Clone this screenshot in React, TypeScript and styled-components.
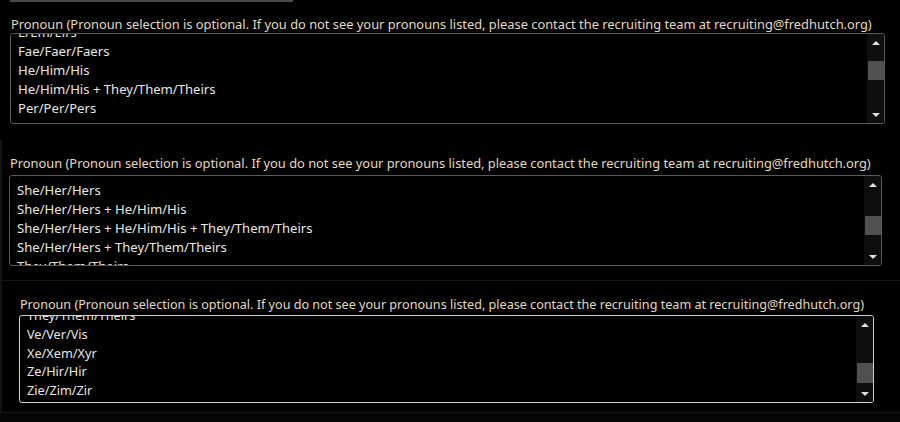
import React from "react";
import styled, { createGlobalStyle } from "styled-components";

const Global = createGlobalStyle`
  html, body { margin: 0; padding: 0; background: #000; }
  body { width: 900px; height: 422px; overflow: hidden; font-family: "Noto Sans", "Open Sans", sans-serif; }
`;

const Page = styled.div`
  width: 900px;
  height: 422px;
  background: #000;
  display: flex;
  flex-direction: column;
`;

const Section = styled.section<{ $h: number; $padTop: number; $padLeft: number; $padRight: number; $gap: number; $edge?: boolean; $topLine?: boolean }>`
  height: ${(p) => p.$h}px;
  box-sizing: border-box;
  padding: ${(p) => p.$padTop}px ${(p) => p.$padRight}px 0 ${(p) => p.$padLeft}px;
  display: flex;
  flex-direction: column;
  gap: ${(p) => p.$gap}px;
  border-left: ${(p) => (p.$edge ? "2px solid #141414" : "none")};
  border-top: ${(p) => (p.$topLine ? "1px solid #161616" : "none")};
`;

const TopRule = styled.div`
  width: 283px;
  height: 2px;
  background: #4a4a4a;
  margin-bottom: 14px;
`;

const Label = styled.div<{ $size: number }>`
  font-size: ${(p) => p.$size}px;
  line-height: 17px;
  color: #e4d9c3;
  white-space: nowrap;
  padding-left: 1px;
`;

const ListBox = styled.div<{ $h: number; $focused?: boolean }>`
  height: ${(p) => p.$h}px;
  box-sizing: border-box;
  border: 1px solid ${(p) => (p.$focused ? "#cfcfcf" : "#5a5a5a")};
  border-radius: 3px;
  display: flex;
  overflow: hidden;
  background: #000;
`;

const Viewport = styled.div`
  flex: 1;
  overflow: hidden;
  padding-left: 7px;
`;

const Items = styled.ul<{ $offset: number; $pitch: number; $size: number }>`
  list-style: none;
  margin: ${(p) => p.$offset}px 0 0 0;
  padding: 0;
  font-size: ${(p) => p.$size}px;
  li {
    height: ${(p) => p.$pitch}px;
    line-height: ${(p) => p.$pitch}px;
  }
`;

const Item = styled.li`
  color: #e8e6e2;
  white-space: nowrap;
`;

const ScrollBar = styled.div`
  width: 17px;
  background: #0e0e0e;
  display: flex;
  flex-direction: column;
  align-items: center;
`;

const Arrow = styled.div<{ $up?: boolean }>`
  height: 17px;
  width: 17px;
  display: flex;
  align-items: center;
  justify-content: center;
  &::after {
    content: "";
    width: 0;
    height: 0;
    border-left: 4px solid transparent;
    border-right: 4px solid transparent;
    ${(p) => (p.$up ? "border-bottom: 4px solid #e0e0e0;" : "border-top: 4px solid #e0e0e0;")}
  }
`;

const Track = styled.div`
  flex: 1;
  width: 100%;
  display: flex;
  flex-direction: column;
`;

const Thumb = styled.div<{ $top: number; $h: number }>`
  margin-top: ${(p) => p.$top}px;
  height: ${(p) => p.$h}px;
  width: 16px;
  margin-left: 1px;
  background: #505050;
`;

const Footer = styled.div`
  flex: 1;
  border-top: 1px solid #1a1a1a;
  background: #060606;
`;

type BoxProps = {
  items: string[];
  h: number;
  offset: number;
  pitch: number;
  size: number;
  thumbTop: number;
  thumbH: number;
  focused?: boolean;
};

const LABEL =
  "Pronoun (Pronoun selection is optional. If you do not see your pronouns listed, please contact the recruiting team at recruiting@fredhutch.org)";

function PronounList({ items, h, offset, pitch, size, thumbTop, thumbH, focused }: BoxProps) {
  return (
    <ListBox $h={h} $focused={focused}>
      <Viewport>
        <Items $offset={offset} $pitch={pitch} $size={size}>
          {items.map((t) => (
            <Item key={t}>{t}</Item>
          ))}
        </Items>
      </Viewport>
      <ScrollBar>
        <Arrow $up />
        <Track>
          <Thumb $top={thumbTop} $h={thumbH} />
        </Track>
        <Arrow />
      </ScrollBar>
    </ListBox>
  );
}

export default function App() {
  return (
    <Page>
      <Global />
      <Section $h={140} $padTop={0} $padLeft={10} $padRight={15} $gap={0}>
        <TopRule />
        <Label $size={12.85}>{LABEL}</Label>
        <PronounList
          h={91}
          offset={-11}
          pitch={19}
          size={13.1}
          thumbTop={10}
          thumbH={19}
          items={["E/Em/Eirs", "Fae/Faer/Faers", "He/Him/His", "He/Him/His + They/Them/Theirs", "Per/Per/Pers"]}
        />
      </Section>
      <Section $h={140} $padTop={15} $padLeft={7} $padRight={18} $gap={3} $edge>
        <Label $size={12.85}>{LABEL}</Label>
        <PronounList
          h={91}
          offset={-14}
          pitch={19}
          size={13.1}
          thumbTop={23}
          thumbH={19}
          items={["Per/Per/Pers", "She/Her/Hers", "She/Her/Hers + He/Him/His", "She/Her/Hers + He/Him/His + They/Them/Theirs", "She/Her/Hers + They/Them/Theirs", "They/Them/Theirs"]}
        />
      </Section>
      <Section $h={132} $padTop={15} $padLeft={17} $padRight={26} $gap={2} $edge $topLine>
        <Label $size={12.6}>{LABEL}</Label>
        <PronounList
          h={88}
          offset={-10}
          pitch={18.8}
          size={12.7}
          thumbTop={30}
          thumbH={20}
          focused
          items={["They/Them/Theirs", "Ve/Ver/Vis", "Xe/Xem/Xyr", "Ze/Hir/Hir", "Zie/Zim/Zir"]}
        />
      </Section>
      <Footer />
    </Page>
  );
}
